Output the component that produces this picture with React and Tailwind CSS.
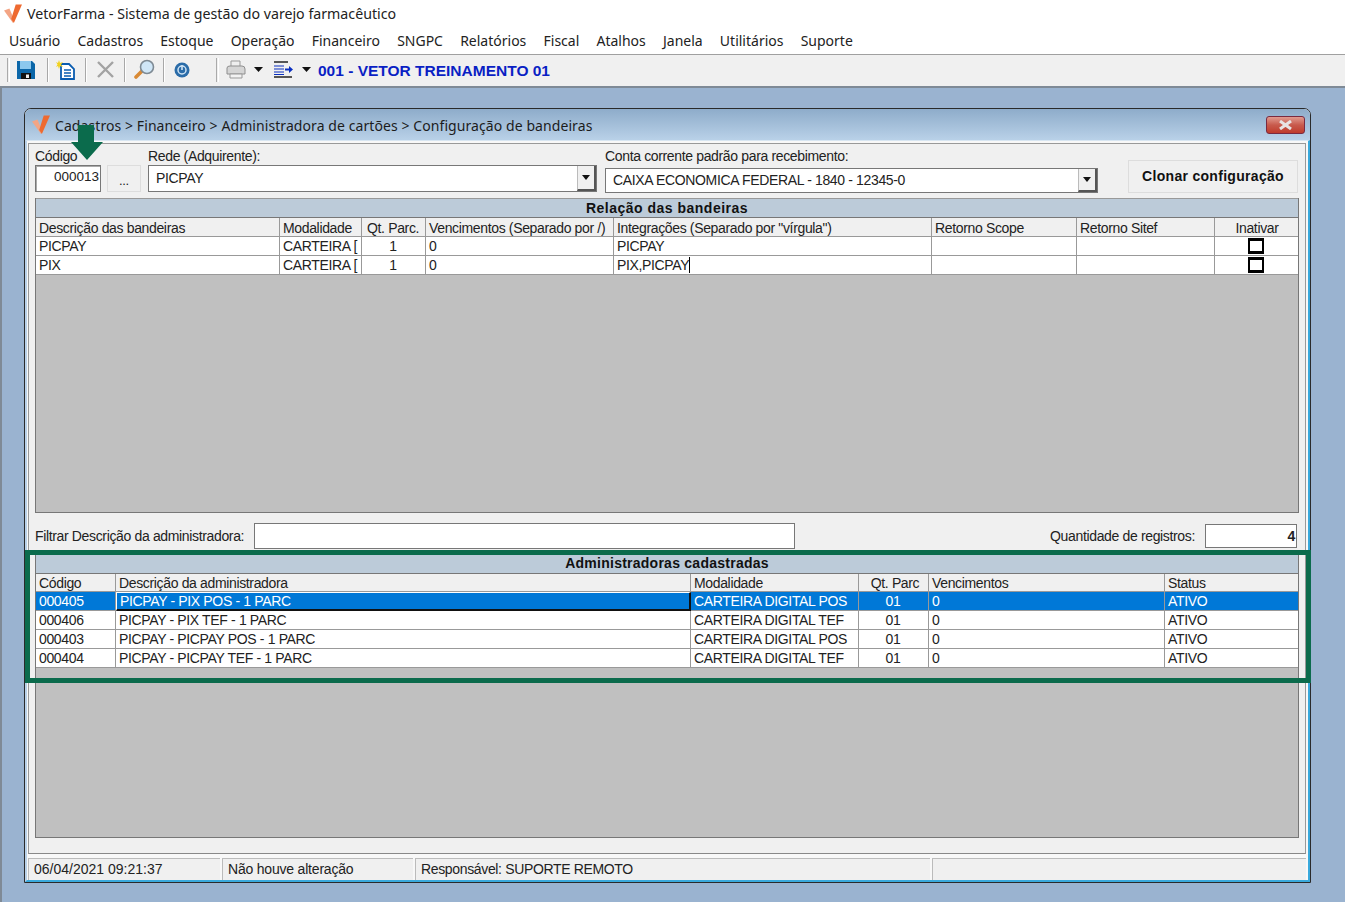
import React from "react";

const menus = ["Usuário", "Cadastros", "Estoque", "Operação", "Financeiro", "SNGPC", "Relatórios", "Fiscal", "Atalhos", "Janela", "Utilitários", "Suporte"];

const bandeiraHead = ["Descrição das bandeiras", "Modalidade", "Qt. Parc.", "Vencimentos (Separado por /)", "Integrações (Separado por \"vírgula\")", "Retorno Scope", "Retorno Sitef", "Inativar"];
const bandeiras = [
  ["PICPAY", "CARTEIRA [", "1", "0", "PICPAY"],
  ["PIX", "CARTEIRA [", "1", "0", "PIX,PICPAY"],
];

const adminHead = ["Código", "Descrição da administradora", "Modalidade", "Qt. Parc", "Vencimentos", "Status"];
const admins = [
  ["000405", "PICPAY - PIX POS - 1 PARC", "CARTEIRA DIGITAL POS", "01", "0", "ATIVO"],
  ["000406", "PICPAY - PIX TEF - 1 PARC", "CARTEIRA DIGITAL TEF", "01", "0", "ATIVO"],
  ["000403", "PICPAY - PICPAY POS - 1 PARC", "CARTEIRA DIGITAL POS", "01", "0", "ATIVO"],
  ["000404", "PICPAY - PICPAY TEF - 1 PARC", "CARTEIRA DIGITAL TEF", "01", "0", "ATIVO"],
];

const Logo = () => (
  <svg width="18" height="20" viewBox="0 0 20 21">
    <path d="M0 6.5L6 4.5L11 16L10 20.5Z" fill="#f3a585" />
    <path d="M13 0H20L11 20.5L8 16Z" fill="#ee6a30" />
  </svg>
);

const Sep = () => <div className="h-[24px] w-[2px] border-l border-[#a8a8a8] bg-white" />;

const Handle = () => <div className="h-[24px] w-[3px] border-x border-l-[#aaa] border-r-white" />;

const Caret = () => (
  <svg width="9" height="5" viewBox="0 0 9 5">
    <path d="M0 0H9L4.5 5Z" fill="#111" />
  </svg>
);

const ComboArrow = () => (
  <div className="flex h-full w-[19px] items-center justify-center border-l border-r-2 border-b-2 border-l-[#bbb] border-r-[#555] border-b-[#555] bg-[#f0f0f0]">
    <svg width="8" height="5" viewBox="0 0 8 5">
      <path d="M0 0H8L4 5Z" fill="#111" />
    </svg>
  </div>
);

const Toolbar = () => (
  <div className="flex h-[32px] items-center border-t border-[#a0a0a0] bg-[#f0f0f0] pb-[2px]">
    <div className="ml-[7px]"><Handle /></div>
    <svg className="ml-[7px]" width="18" height="18" viewBox="0 0 18 18">
      <path d="M0 0H15L18 3V18H0Z" fill="#0b66a8" />
      <rect x="3" y="0" width="11" height="8" fill="#8cc8ee" />
      <rect x="4" y="12" width="10" height="6" fill="#111" />
      <rect x="9" y="13.5" width="3" height="3.5" fill="#eee" />
    </svg>
    <div className="ml-[12px]"><Sep /></div>
    <svg className="ml-[7px]" width="19" height="20" viewBox="0 0 19 20">
      <path d="M5 4H13L18 9V19H5Z" fill="#fff" stroke="#0a5cb0" strokeWidth="1.8" />
      <path d="M8 10H15M8 13H15M8 16H15" stroke="#0a5cb0" strokeWidth="1.3" />
      <path d="M3 0L4 3L7 2L5 4.5L7 7L4 6L3 9L2 6L0 7L1.5 4.5L0 2L2 3Z" fill="#f2d21e" />
    </svg>
    <div className="ml-[10px]"><Sep /></div>
    <svg className="ml-[10px]" width="17" height="17" viewBox="0 0 17 17">
      <path d="M1 1L16 16M16 1L1 16" stroke="#a3a3a3" strokeWidth="2.4" />
    </svg>
    <div className="ml-[10px]"><Sep /></div>
    <svg className="ml-[8px]" width="21" height="21" viewBox="0 0 21 21">
      <path d="M8 12L2 18" stroke="#d98a35" strokeWidth="3.6" strokeLinecap="round" />
      <circle cx="13" cy="8" r="6.5" fill="#cfe6f7" stroke="#7e8a94" strokeWidth="1.6" />
    </svg>
    <div className="ml-[8px]"><Sep /></div>
    <svg className="ml-[9px]" width="16" height="16" viewBox="0 0 16 16">
      <circle cx="8" cy="8" r="7.5" fill="#2b6ca8" />
      <circle cx="8" cy="8" r="4" fill="none" stroke="#cfe3f3" strokeWidth="1.5" />
      <path d="M8 3V8" stroke="#cfe3f3" strokeWidth="1.6" />
    </svg>
    <div className="ml-[26px]"><Handle /></div>
    <svg className="ml-[7px]" width="20" height="19" viewBox="0 0 20 19">
      <path d="M5 1H14V7H5Z" fill="#eee" stroke="#999" />
      <path d="M1 8Q1 6 4 6H16Q19 6 19 9V14H1Z" fill="#d5d5d5" stroke="#8f8f8f" />
      <path d="M4 14H16V18H4Z" fill="#f2f2f2" stroke="#999" />
    </svg>
    <div className="ml-[8px]"><Caret /></div>
    <svg className="ml-[11px]" width="19" height="18" viewBox="0 0 19 18">
      <path d="M0 1H14M0 16H18" stroke="#222" strokeWidth="1.4" />
      <path d="M0 5H10M0 8H10M0 11H10M0 13.5H10" stroke="#0a2fc0" strokeWidth="1.2" />
      <path d="M11 7.5H15V5L19 8.5L15 12V9.5H11Z" fill="#0a2fc0" />
    </svg>
    <div className="ml-[9px]"><Caret /></div>
    <span className="ml-[7px] mt-[2px] font-['Liberation_Sans',sans-serif] text-[15.5px] font-bold text-[#0a1fc4]">001 - VETOR TREINAMENTO 01</span>
  </div>
);

const BandeiraTable = () => (
  <div className="flex h-[315px] flex-col border-r border-b border-l border-[#777] bg-[#c0c0c0]">
    <div className="flex h-[20px] items-center justify-center border-t border-b border-t-[#999] border-b-[#777] bg-[#bccbd9] font-bold tracking-[0.5px] text-[#111]">Relação das bandeiras</div>
    <div className="grid grid-cols-[244px_82px_64px_188px_318px_145px_138px_83px] bg-[#f0f0f0]">
      {bandeiraHead.map((h, i) => (
        <div key={h} className={`flex h-[19px] items-center overflow-hidden whitespace-nowrap border-r border-b border-[#999] pl-[3px] pt-[2px] last:border-r-0 ${i === 7 ? "justify-center pl-0 pr-[2px]" : ""} ${i === 2 ? "pl-[5px]" : ""}`}>{h}</div>
      ))}
    </div>
    {bandeiras.map((row) => (
      <div key={row[0]} className="grid grid-cols-[244px_82px_64px_188px_318px_145px_138px_83px] bg-white">
        {row.map((c, i) => (
          <div key={i} className={`flex h-[19px] items-center overflow-hidden whitespace-nowrap border-r border-b border-[#999] pl-[3px] ${i === 2 ? "justify-center pl-0 pr-[4px]" : ""}`}>
            {c}
            {c === "PIX,PICPAY" && <span className="h-[16px] w-px bg-black" />}
          </div>
        ))}
        <div className="h-[19px] border-r border-b border-[#999]" />
        <div className="h-[19px] border-r border-b border-[#999]" />
        <div className="flex h-[19px] items-center justify-center border-b border-[#999] pr-[2px]">
          <div className="h-[16px] w-[16px] border-x-2 border-y-[3px] border-black bg-white" />
        </div>
      </div>
    ))}
  </div>
);

const AdminTable = () => (
  <div className="flex h-[284px] flex-col border-r border-b border-l border-[#777] bg-[#c0c0c0]">
    <div className="flex h-[20px] items-center justify-center border-b border-[#777] bg-[#bccbd9] font-bold tracking-[0.25px] text-[#111]">Administradoras cadastradas</div>
    <div className="grid grid-cols-[80px_575px_168px_70px_236px_133px] bg-[#f0f0f0]">
      {adminHead.map((h, i) => (
        <div key={h} className={`flex h-[18px] items-center whitespace-nowrap border-r border-b border-[#999] pl-[3px] pt-[1px] last:border-r-0 ${i === 3 ? "justify-center pl-0" : ""}`}>{h}</div>
      ))}
    </div>
    {admins.map((row, r) => (
      <div key={row[0]} className={`grid grid-cols-[80px_575px_168px_70px_236px_133px] ${r === 0 ? "bg-[#0078d7] text-white" : "bg-white"}`}>
        {row.map((c, i) => (
          <div key={i} className={`flex h-[19px] items-center whitespace-nowrap border-r border-b border-[#999] pl-[3px] last:border-r-0 ${i === 3 ? "justify-center pl-0 pr-[4px]" : ""} ${r === 0 && i === 1 ? "border-t border-l border-b-2 border-r-2 border-t-white border-l-white border-b-[#111] border-r-[#111]" : ""}`}>{c}</div>
        ))}
      </div>
    ))}
  </div>
);

const Window = () => (
  <div className="ml-[22px] mt-[20px] flex h-[775px] w-[1287px] flex-col rounded-t-[7px] border border-[#2a2a2a] bg-[#f0f0f0] font-['Liberation_Sans',sans-serif] text-[14px] tracking-[-0.35px] text-[#222]">
    <div className="flex h-[31px] items-center rounded-t-[6px] bg-gradient-to-b from-[#8eacca] to-[#b9d1e8] pl-[7px] pr-[5px]">
      <Logo />
      <span className="ml-[5px] mt-[2px] font-['Noto_Sans',sans-serif] text-[14px] tracking-[0.08px] text-[#1c1c1c]">Cadastros &gt; Financeiro &gt; Administradora de cartões &gt; Configuração de bandeiras</span>
      <div className="ml-auto flex h-[18px] w-[39px] items-center justify-center rounded-[3px] border border-[#7a2a40] bg-gradient-to-b from-[#e09a90] via-[#c85a4c] to-[#bf3a2b]">
        <svg width="15" height="10" viewBox="0 0 15 10">
          <path d="M2 1L13 9M13 1L2 9" stroke="#e8e4e4" strokeWidth="3" />
        </svg>
      </div>
    </div>
    <div className="flex flex-1 flex-col border-x-2 border-t border-b-2 border-t-[#d8e6f2] border-l-[#b9d1e8] border-r-[#39a9dc] border-b-[#39a9dc] bg-[#f8f8f8] pl-[1px] pr-[2px] pt-[2px]">
      <div className="flex flex-1 flex-col border border-[#999] border-b-[#888] bg-[#f0f0f0] pl-[6px] pr-[6px]">
        <div className="mt-[2px] flex h-[47px]">
          <div className="flex w-[66px] flex-col">
            <span className="h-[19px]">Código</span>
            <div className="flex h-[27px] items-center justify-end border border-[#777] bg-white pb-[2px] pr-[1px] text-[13.5px] tracking-normal shadow-[inset_1px_1px_0_#aaa]">000013</div>
          </div>
          <div className="ml-[6px] mt-[19px] flex h-[27px] w-[34px] items-end justify-center border border-[#ddd] bg-[#f0f0f0] pb-[4px] text-[13px] leading-none">...</div>
          <div className="ml-[7px] flex w-[449px] flex-col">
            <span className="h-[19px]">Rede (Adquirente):</span>
            <div className="flex h-[27px] items-center border border-[#777] bg-white pl-[7px]">
              <span className="flex-1">PICPAY</span>
              <ComboArrow />
            </div>
          </div>
          <div className="ml-[8px] flex w-[493px] flex-col">
            <span className="h-[22px]">Conta corrente padrão para recebimento:</span>
            <div className="flex h-[26px] items-center border border-[#777] bg-white pl-[7px]">
              <span className="flex-1">CAIXA ECONOMICA FEDERAL - 1840 - 12345-0</span>
              <ComboArrow />
            </div>
          </div>
          <div className="ml-[30px] mt-[14px] flex h-[33px] w-[170px] items-center justify-center border border-[#ddd] bg-[#f0f0f0] font-bold tracking-[0.3px] text-[#111]">Clonar configuração</div>
        </div>
        <div className="mt-[5px]"><BandeiraTable /></div>
        <div className="mt-[10px] flex h-[26px] items-center">
          <span className="w-[219px]">Filtrar Descrição da administradora:</span>
          <div className="h-[26px] w-[541px] border border-[#777] bg-white" />
          <span className="ml-auto">Quantidade de registros:</span>
          <div className="ml-[10px] mr-[2px] flex h-[24px] w-[92px] items-center justify-end border border-[#777] bg-white pr-[1px] font-bold">4</div>
        </div>
        <div className="mt-[5px]"><AdminTable /></div>
      </div>
      <div className="mt-[4px] flex h-[22px] gap-[2px]">
        <div className="flex w-[192px] items-center border-t border-l border-[#bbb] bg-[#f0f0f0] pl-[5px] tracking-normal">06/04/2021 09:21:37</div>
        <div className="flex w-[191px] items-center border-t border-l border-[#bbb] bg-[#f0f0f0] pl-[5px] tracking-[-0.2px]">Não houve alteração</div>
        <div className="flex w-[515px] items-center border-t border-l border-[#bbb] bg-[#f0f0f0] pl-[5px]">Responsável: SUPORTE REMOTO</div>
        <div className="flex-1 border-t border-l border-[#bbb] bg-[#f0f0f0]" />
      </div>
    </div>
  </div>
);

export default function App() {
  return (
    <div className="relative flex h-[902px] w-[1345px] flex-col overflow-hidden bg-white font-['Noto_Sans',sans-serif] text-[14px] text-[#222]">
      <div className="flex h-[28px] items-center pl-[4px]">
        <Logo />
        <span className="ml-[5px] text-[14.2px]">VetorFarma - Sistema de gestão do varejo farmacêutico</span>
      </div>
      <div className="flex h-[26px] items-center gap-[17.2px] pb-[2px] pl-[9px]">
        {menus.map((m) => <span key={m}>{m}</span>)}
      </div>
      <Toolbar />
      <div className="flex-1 border-t-2 border-l-2 border-[#7f8a96] bg-[#9ab3d0]">
        <Window />
      </div>

      {/* annotations over the screenshot */}
      <svg className="absolute left-[71px] top-[125px]" width="32" height="35" viewBox="0 0 32 35">
        <path d="M7 0H23V17H32L16 35L0 17H7Z" fill="#0b6b4c" />
      </svg>
      <div className="absolute left-[25px] top-[550px] h-[133px] w-[1286px] border-[5px] border-[#0b6b4c]" />
    </div>
  );
}
